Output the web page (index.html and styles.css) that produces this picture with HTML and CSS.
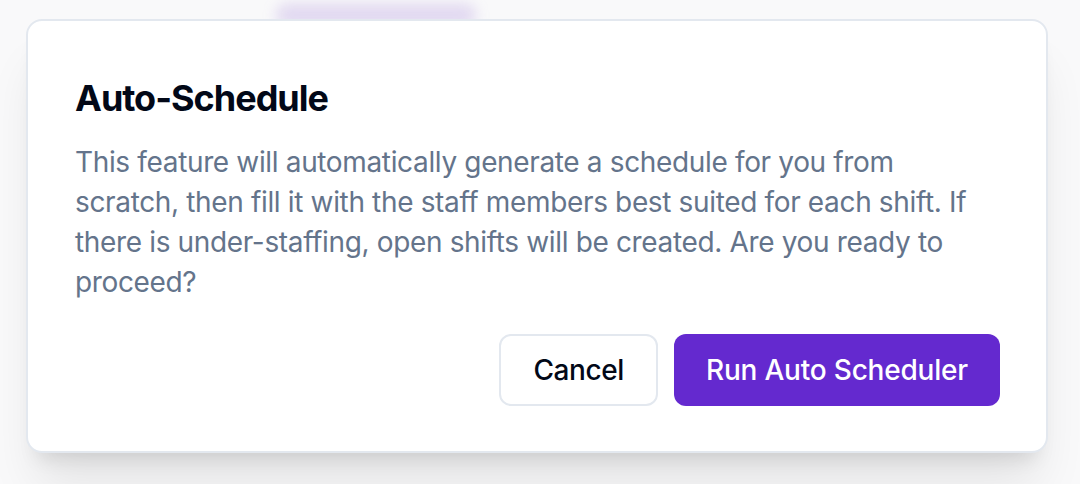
FILE: index.html
```html
<!DOCTYPE html>
<html lang="en">
<head>
<meta charset="utf-8">
<title>Auto-Schedule</title>
<link rel="stylesheet" href="styles.css">
</head>
<body>
  <div class="backdrop-blob"></div>
  <div class="dialog" role="alertdialog" aria-labelledby="dlg-title">
    <div class="dialog-header">
      <h2 class="dialog-title" id="dlg-title">Auto-Schedule</h2>
      <p class="dialog-desc">This feature will automatically generate a schedule for you from scratch, then fill it with the staff members best suited for each shift. If there is under-staffing, open shifts will be created. Are you ready to proceed?</p>
    </div>
    <div class="dialog-footer">
      <button class="btn btn-outline" type="button">Cancel</button>
      <button class="btn btn-primary" type="button">Run Auto Scheduler</button>
    </div>
  </div>
</body>
</html>
```
FILE: styles.css
```css
* { box-sizing: border-box; }
html, body { height: 100%; }
body {
  margin: 0;
  background: #f9f9fa;
  font-family: Inter, "Noto Sans", "Liberation Sans", sans-serif;
  padding: 19px 0 0 26px;
  position: relative;
  overflow: hidden;
}
.backdrop-blob {
  position: absolute;
  left: 276px;
  top: 4px;
  width: 200px;
  height: 22px;
  border-radius: 11px;
  background: rgba(140, 100, 210, 0.22);
  filter: blur(7px);
}
.dialog {
  position: relative;
  width: 1022px;
  background: #ffffff;
  border: 2px solid #e3e8ef;
  border-radius: 16px;
  padding: 49px 46px 45px 47px;
  display: flex;
  flex-direction: column;
  gap: 32px;
  box-shadow: 0 40px 50px -10px rgba(0,0,0,0.09), 0 16px 20px -12px rgba(0,0,0,0.12);
}
.dialog-header {
  display: flex;
  flex-direction: column;
  gap: 16px;
}
.dialog-title {
  margin: 0;
  font-size: 36px;
  line-height: 56px;
  font-weight: 650;
  letter-spacing: -1px;
  color: #020817;
}
.dialog-desc {
  margin: 0;
  font-size: 28px;
  line-height: 40px;
  letter-spacing: -0.35px;
  color: #64748b;
}
.dialog-footer {
  display: flex;
  justify-content: flex-end;
  gap: 16px;
}
.btn {
  height: 72px;
  padding: 0 32px;
  border-radius: 12px;
  font-family: inherit;
  font-size: 28px;
  font-weight: 500;
  display: inline-flex;
  align-items: center;
  justify-content: center;
  cursor: pointer;
}
.btn-outline {
  background: #ffffff;
  border: 2px solid #e3e8ef;
  color: #020817;
  letter-spacing: -0.4px;
}
.btn-primary {
  background: #6429cf;
  border: none;
  color: #ffffff;
  letter-spacing: -0.2px;
}
```
